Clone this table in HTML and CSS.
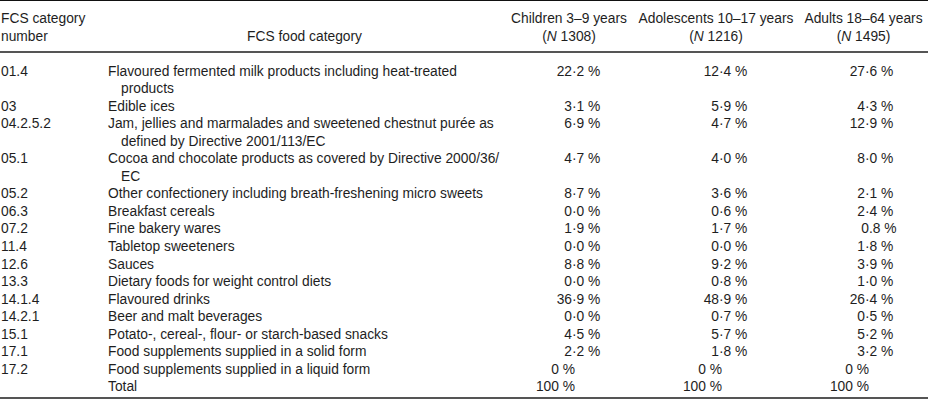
FILE: index.html
```html
<!DOCTYPE html>
<html lang="en">
<head>
<meta charset="utf-8">
<title>FCS food categories</title>
<link rel="stylesheet" href="styles.css">
</head>
<body>
<table class="fcs">
  <colgroup>
    <col class="c-num">
    <col class="c-cat">
    <col class="c-ch">
    <col class="c-ad">
    <col class="c-al">
  </colgroup>
  <thead>
    <tr>
      <th class="h-num">FCS category<br>number</th>
      <th class="h-cat">FCS food category</th>
      <th class="h-grp">Children 3–9 years<br>(<i>N</i> 1308)</th>
      <th class="h-grp">Adolescents 10–17 years<br>(<i>N</i> 1216)</th>
      <th class="h-grp">Adults 18–64 years<br>(<i>N</i> 1495)</th>
    </tr>
  </thead>
  <tbody>
    <tr>
      <td class="num">01.4</td>
      <td class="cat">Flavoured fermented milk products including heat-treated<span class="cont">products</span></td>
      <td class="v v1"><span class="i">22</span>·2 %</td>
      <td class="v v2"><span class="i">12</span>·4 %</td>
      <td class="v v3"><span class="i">27</span>·6 %</td>
    </tr>
    <tr>
      <td class="num">03</td>
      <td class="cat">Edible ices</td>
      <td class="v v1"><span class="i">3</span>·1 %</td>
      <td class="v v2"><span class="i">5</span>·9 %</td>
      <td class="v v3"><span class="i">4</span>·3 %</td>
    </tr>
    <tr>
      <td class="num">04.2.5.2</td>
      <td class="cat">Jam, jellies and marmalades and sweetened chestnut purée as<span class="cont">defined by Directive 2001/113/EC</span></td>
      <td class="v v1"><span class="i">6</span>·9 %</td>
      <td class="v v2"><span class="i">4</span>·7 %</td>
      <td class="v v3"><span class="i">12</span>·9 %</td>
    </tr>
    <tr>
      <td class="num">05.1</td>
      <td class="cat">Cocoa and chocolate products as covered by Directive 2000/36/<span class="cont">EC</span></td>
      <td class="v v1"><span class="i">4</span>·7 %</td>
      <td class="v v2"><span class="i">4</span>·0 %</td>
      <td class="v v3"><span class="i">8</span>·0 %</td>
    </tr>
    <tr>
      <td class="num">05.2</td>
      <td class="cat">Other confectionery including breath-freshening micro sweets</td>
      <td class="v v1"><span class="i">8</span>·7 %</td>
      <td class="v v2"><span class="i">3</span>·6 %</td>
      <td class="v v3"><span class="i">2</span>·1 %</td>
    </tr>
    <tr>
      <td class="num">06.3</td>
      <td class="cat">Breakfast cereals</td>
      <td class="v v1"><span class="i">0</span>·0 %</td>
      <td class="v v2"><span class="i">0</span>·6 %</td>
      <td class="v v3"><span class="i">2</span>·4 %</td>
    </tr>
    <tr>
      <td class="num">07.2</td>
      <td class="cat">Fine bakery wares</td>
      <td class="v v1"><span class="i">1</span>·9 %</td>
      <td class="v v2"><span class="i">1</span>·7 %</td>
      <td class="v v3"><span class="i nudge">0</span>.8 %</td>
    </tr>
    <tr>
      <td class="num">11.4</td>
      <td class="cat">Tabletop sweeteners</td>
      <td class="v v1"><span class="i">0</span>·0 %</td>
      <td class="v v2"><span class="i">0</span>·0 %</td>
      <td class="v v3"><span class="i">1</span>·8 %</td>
    </tr>
    <tr>
      <td class="num">12.6</td>
      <td class="cat">Sauces</td>
      <td class="v v1"><span class="i">8</span>·8 %</td>
      <td class="v v2"><span class="i">9</span>·2 %</td>
      <td class="v v3"><span class="i">3</span>·9 %</td>
    </tr>
    <tr>
      <td class="num">13.3</td>
      <td class="cat">Dietary foods for weight control diets</td>
      <td class="v v1"><span class="i">0</span>·0 %</td>
      <td class="v v2"><span class="i">0</span>·8 %</td>
      <td class="v v3"><span class="i">1</span>·0 %</td>
    </tr>
    <tr>
      <td class="num">14.1.4</td>
      <td class="cat">Flavoured drinks</td>
      <td class="v v1"><span class="i">36</span>·9 %</td>
      <td class="v v2"><span class="i">48</span>·9 %</td>
      <td class="v v3"><span class="i">26</span>·4 %</td>
    </tr>
    <tr>
      <td class="num">14.2.1</td>
      <td class="cat">Beer and malt beverages</td>
      <td class="v v1"><span class="i">0</span>·0 %</td>
      <td class="v v2"><span class="i">0</span>·7 %</td>
      <td class="v v3"><span class="i">0</span>·5 %</td>
    </tr>
    <tr>
      <td class="num">15.1</td>
      <td class="cat">Potato-, cereal-, flour- or starch-based snacks</td>
      <td class="v v1"><span class="i">4</span>·5 %</td>
      <td class="v v2"><span class="i">5</span>·7 %</td>
      <td class="v v3"><span class="i">5</span>·2 %</td>
    </tr>
    <tr>
      <td class="num">17.1</td>
      <td class="cat">Food supplements supplied in a solid form</td>
      <td class="v v1"><span class="i">2</span>·2 %</td>
      <td class="v v2"><span class="i">1</span>·8 %</td>
      <td class="v v3"><span class="i">3</span>·2 %</td>
    </tr>
    <tr>
      <td class="num">17.2</td>
      <td class="cat">Food supplements supplied in a liquid form</td>
      <td class="v v1"><span class="i whole">0 %</span></td>
      <td class="v v2"><span class="i whole">0 %</span></td>
      <td class="v v3"><span class="i whole">0 %</span></td>
    </tr>
    <tr class="last">
      <td class="num"></td>
      <td class="cat">Total</td>
      <td class="v v1"><span class="i whole">100 %</span></td>
      <td class="v v2"><span class="i whole">100 %</span></td>
      <td class="v v3"><span class="i whole">100 %</span></td>
    </tr>
  </tbody>
</table>
</body>
</html>
```

FILE: styles.css
```css
html, body {
  margin: 0;
  padding: 0;
  background: #ffffff;
}

body {
  font-family: "Liberation Sans", Arial, Helvetica, sans-serif;
  font-size: 13.8px;
  color: #1e1e1e;
}

.fcs {
  width: 928px;
  table-layout: fixed;
  border-collapse: collapse;
  border-top: 1px solid #111;
  border-bottom: 2px solid #555;
}

.c-num { width: 108px; }
.c-cat { width: 397px; }
.c-ch  { width: 128px; }
.c-ad  { width: 166px; }
.c-al  { width: 129px; }

.fcs th {
  font-weight: normal;
  line-height: 18px;
  padding: 9px 0 5px 0;
  vertical-align: bottom;
  border-bottom: 2px solid #555;
}

.fcs th i { font-style: italic; }

.h-num {
  text-align: left;
  padding-left: 1px !important;
}

.h-cat {
  text-align: center;
  padding-right: 4px !important;
}

.h-grp {
  text-align: center;
  white-space: nowrap;
}

.fcs td {
  padding: 0;
  line-height: 17.55px;
  vertical-align: top;
  white-space: nowrap;
}

.fcs tbody tr:first-child td {
  padding-top: 9.5px;
}

.fcs tbody tr.last td {
  padding-bottom: 1.5px;
}

.num {
  padding-left: 1px !important;
}

.cont {
  display: block;
  padding-left: 13px;
}

.v .i {
  display: inline-block;
  text-align: right;
}

.v1 .i { width: 67px; }
.v2 .i { width: 86px; }
.v3 .i { width: 66px; }

.v1 .i.whole { width: 70px; }
.v2 .i.whole { width: 89px; }
.v3 .i.whole { width: 70px; }

.v3 .i.nudge { width: 70px; }
```
